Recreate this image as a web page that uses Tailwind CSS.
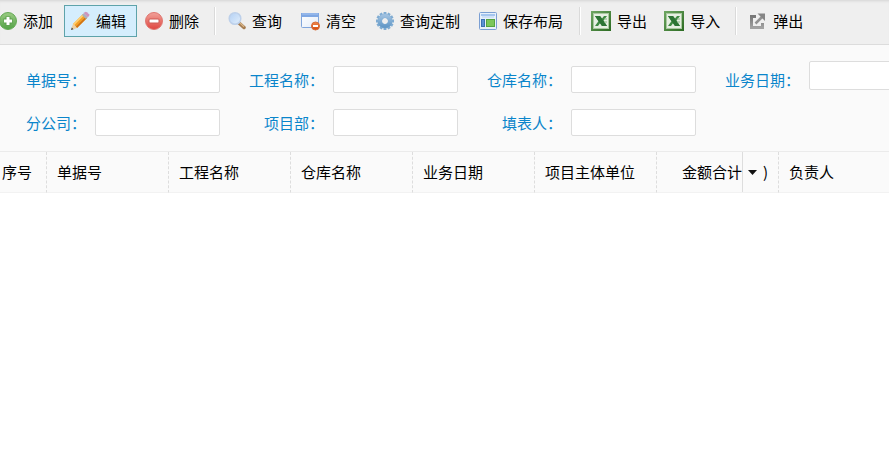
<!DOCTYPE html>
<html lang="zh-CN">
<head>
<meta charset="utf-8">
<title>单据列表</title>
<script src="https://cdn.jsdelivr.net/npm/@tailwindcss/browser@4"></script>
</head>
<body class="min-h-screen overflow-x-hidden bg-white font-['Noto_Sans_CJK_SC','Noto_Sans',sans-serif] text-[15px] leading-5 text-black">
<svg class="absolute size-0" aria-hidden="true">
  <defs>
    <linearGradient id="green" x2="0" y2="1"><stop stop-color="#9acb83"/><stop offset="1" stop-color="#53a246"/></linearGradient>
    <linearGradient id="red" x2="0" y2="1"><stop stop-color="#f1a29a"/><stop offset="1" stop-color="#df453f"/></linearGradient>
    <linearGradient id="orange" x2="0" y2="1"><stop stop-color="#f08a50"/><stop offset="1" stop-color="#d2480c"/></linearGradient>
    <linearGradient id="blue" x2="0" y2="1"><stop stop-color="#9dbfdf"/><stop offset="1" stop-color="#659ac8"/></linearGradient>
    <linearGradient id="lens" x2="1" y2="1"><stop stop-color="#b3d0f4"/><stop offset="1" stop-color="#e2effc"/></linearGradient>
    <linearGradient id="page" x2="1" y2="1"><stop stop-color="#ffffff"/><stop offset="1" stop-color="#e3ecf8"/></linearGradient>
    <linearGradient id="excel" x2="1" y2="1"><stop stop-color="#6fa763"/><stop offset="1" stop-color="#2c6b22"/></linearGradient>
    <linearGradient id="grey" x2="0" y2="1"><stop stop-color="#777777"/><stop offset="1" stop-color="#a2a2a2"/></linearGradient>
    <symbol id="excel-icon" viewBox="0 0 20 20">
      <rect width="20" height="20" fill="url(#excel)"/>
      <rect x="2.5" y="2.5" width="15" height="15" fill="#e6efe2" stroke="#a9c8a0"/>
      <path d="M4 5h5l2 2.5L13 5h3l-3.5 4.6L16 15h-5l-2-2.700L7 15H4l3.400-4.700z" fill="#3f8a42"/>
      <path d="M4 5h5l7 10h-5z" fill="#2c7434"/>
      <path d="M13 11h3M13 8h3" stroke="#8cb887"/>
    </symbol>
  </defs>
</svg>

<header class="overflow-hidden border-b border-[#dcdcdc] bg-[#efefef] shadow-[inset_0_3px_3px_-2px_#d4d4d4]">
  <div role="toolbar" aria-label="操作" class="-ml-[9px] flex h-11 items-center whitespace-nowrap pt-[2px] pb-[4px]">
    <button type="button" class="flex h-8 shrink-0 items-center gap-1.5 border border-transparent pr-2.5 pl-[5px]">
      <svg class="size-5" viewBox="0 0 20 20"><circle cx="11" cy="10" r="8.500" fill="url(#green)" stroke="#65aa56"/><path d="M11 5.500v9M6.500 10h9" stroke="#5a9d4c" stroke-width="5"/><path d="M11 6v8M7 10h8" stroke="#fff" stroke-width="3"/></svg>添加</button>
    <button type="button" class="flex h-8 shrink-0 items-center gap-1.5 border border-[#5ea3aa] bg-[#d5eefd] pr-2.5 pl-[5px]">
      <svg class="size-5" viewBox="0 0 20 20"><path d="M3 13 13 3l4 4L7 17z" fill="#f3a127"/><path d="M3 13 13 3l1.200 1.200L4.200 14.200z" fill="#ffd072"/><path d="m5.800 15.800 10-10L17 7 7 17z" fill="#cf7417"/><path d="m3 13 4 4-5.500 2-.5-.5z" fill="#eed0a0"/><path d="m1.800 16.500 1.700 1.700-2.500.8z" fill="#444"/><path d="m12 4 1.800-1.800 4 4L16 8z" fill="#a9b0bd"/><path d="m13.800 2.200 1-1q1-.7 2 0L19 3.300q.7 1 0 1.800l-1.200 1.100z" fill="#cd95bd"/></svg>编辑</button>
    <button type="button" class="flex h-8 shrink-0 items-center gap-1.5 border border-transparent pr-2.5 pl-[5px]">
      <svg class="size-5" viewBox="0 0 20 20"><circle cx="11" cy="10" r="8.500" fill="url(#red)" stroke="#df7771"/><rect x="6" y="8" width="10" height="4" rx="1" fill="#fff" stroke="#ce5a54"/></svg>删除</button>
    <span class="mr-1 ml-1 box-content h-7 w-px shrink-0 border-r border-white bg-[#dadada]" role="separator"></span>
    <button type="button" class="flex h-8 shrink-0 items-center gap-1.5 border border-transparent pr-2.5 pl-[5px]">
      <svg class="size-5" viewBox="0 0 20 20"><path d="m13.500 12.500 4.500 4" stroke="#a57c50" stroke-width="3.500" stroke-linecap="round"/><path d="m14 12 4 3.700" stroke="#d9b78b" stroke-width="1.200"/><circle cx="9" cy="7.500" r="5.800" fill="url(#lens)" stroke="#bdd0ea" stroke-width="1.500"/></svg>查询</button>
    <button type="button" class="ml-px flex h-8 shrink-0 items-center gap-1.5 border border-transparent pr-2.5 pl-[5px]">
      <svg class="size-5" viewBox="0 0 20 20"><rect x="1.500" y="2.500" width="17" height="14" rx="1" fill="url(#page)" stroke="#81a6dc"/><path d="M1 2h18v4H1z" fill="#7fa7e3"/><path d="M2 3h16" stroke="#a8c5f0"/><circle cx="15.500" cy="15" r="4" fill="url(#orange)" stroke="#d86d39"/><path d="M13 15h5" stroke="#fff" stroke-width="2"/></svg>清空</button>
    <button type="button" class="ml-px flex h-8 shrink-0 items-center gap-1.5 border border-transparent pr-2.5 pl-[5px]">
      <svg class="size-5" viewBox="0 0 20 20"><g transform="translate(11 10)"><circle r="5.200" fill="none" stroke="#7eabd2" stroke-width="4.500"/><g stroke="#7eabd2" stroke-width="2.800"><path d="M0-9V-6M0 6V9M-9 0H-6M6 0H9"/><path d="M0-9V-6M0 6V9M-9 0H-6M6 0H9" transform="rotate(30)"/><path d="M0-9V-6M0 6V9M-9 0H-6M6 0H9" transform="rotate(60)"/></g><circle r="5.200" fill="none" stroke="url(#blue)" stroke-width="4"/></g></svg>查询定制</button>
    <button type="button" class="flex h-8 shrink-0 items-center gap-1.5 border border-transparent pr-2.5 pl-[5px]">
      <svg class="size-5" viewBox="0 0 20 20"><rect x="2.500" y="1.500" width="17" height="17" rx="1" fill="#e7f0fb" stroke="#7b9fd3"/><path d="M4 3h14v2H4z" fill="#a5c6ef"/><path d="M5 6h12" stroke="#bad3f2"/><rect x="4.500" y="8.500" width="3" height="7" fill="#5a91d4" stroke="#3c70b2"/><rect x="9.500" y="8.500" width="8" height="7" fill="#7bc65a" stroke="#54a440"/></svg>保存布局</button>
    <span class="mr-1 ml-[5px] box-content h-7 w-px shrink-0 border-r border-white bg-[#dadada]" role="separator"></span>
    <button type="button" class="flex h-8 shrink-0 items-center gap-1.5 border border-transparent pr-2.5 pl-[5px]">
      <svg class="size-5"><use href="#excel-icon"/></svg>导出</button>
    <button type="button" class="flex h-8 shrink-0 items-center gap-1.5 border border-transparent pr-2.5 pl-[5px]">
      <svg class="size-5"><use href="#excel-icon"/></svg>导入</button>
    <span class="mr-1 ml-1 box-content h-7 w-px shrink-0 border-r border-white bg-[#dadada]" role="separator"></span>
    <button type="button" class="flex h-8 shrink-0 items-center gap-1.5 border border-transparent pr-2.5 pl-[5px]">
      <svg class="size-5" viewBox="0 0 20 20" fill="none"><path d="M9 5.500H4.500v11h11V12" stroke="url(#grey)" stroke-width="3"/><path d="m8.500 12.500 7-7" stroke="#929292" stroke-width="2.500"/><path d="M10.500 2.500H18V10l-2.500-2.500-2.500-2.500z" fill="#858585"/></svg>弹出</button>
  </div>
</header>

<form class="overflow-hidden border-b border-[#ebebeb] bg-[#fafafa] pt-4 pb-2.5">
  <div class="-mr-12 grid grid-cols-[repeat(3,238px)_minmax(220px,1fr)] gap-y-1.5 text-[#0a85cb]">
    <div class="flex h-[37px] items-center gap-[9px]"><label for="billNo" class="w-[86px] text-right">单据号：</label><input id="billNo" type="text" class="h-[27px] w-[125px] rounded-xs border border-[#dddddd] bg-white px-2 text-black"></div>
    <div class="flex h-[37px] items-center gap-[9px]"><label for="project" class="w-[86px] text-right">工程名称：</label><input id="project" type="text" class="h-[27px] w-[125px] rounded-xs border border-[#dddddd] bg-white px-2 text-black"></div>
    <div class="flex h-[37px] items-center gap-[9px]"><label for="store" class="w-[86px] text-right">仓库名称：</label><input id="store" type="text" class="h-[27px] w-[125px] rounded-xs border border-[#dddddd] bg-white px-2 text-black"></div>
    <div class="flex h-[37px] items-center gap-[9px]"><label for="bizDate" class="w-[86px] text-right">业务日期：</label><input id="bizDate" type="text" class="h-[29px] w-[125px] self-start rounded-xs border border-[#dddddd] bg-white px-2 text-black"></div>
    <div class="flex h-[37px] items-center gap-[9px]"><label for="branch" class="w-[86px] text-right">分公司：</label><input id="branch" type="text" class="h-[27px] w-[125px] rounded-xs border border-[#dddddd] bg-white px-2 text-black"></div>
    <div class="flex h-[37px] items-center gap-[9px]"><label for="dept" class="w-[86px] text-right">项目部：</label><input id="dept" type="text" class="h-[27px] w-[125px] rounded-xs border border-[#dddddd] bg-white px-2 text-black"></div>
    <div class="flex h-[37px] items-center gap-[9px]"><label for="author" class="w-[86px] text-right">填表人：</label><input id="author" type="text" class="h-[27px] w-[125px] rounded-xs border border-[#dddddd] bg-white px-2 text-black"></div>
  </div>
</form>

<table class="w-full table-fixed border-separate border-spacing-0 bg-[#fafafa] text-left whitespace-nowrap">
  <thead>
    <tr class="h-[41px] *:border-b *:border-b-[#f2f2f2] *:p-0 *:font-normal">
      <th scope="col" class="w-[47px] border-r border-r-[#dddddd] [border-right-style:dashed]"><div class="pl-0.5">序号</div></th>
      <th scope="col" class="w-[122px] border-r border-r-[#dddddd] [border-right-style:dashed]"><div class="pl-2.5">单据号</div></th>
      <th scope="col" class="w-[122px] border-r border-r-[#dddddd] [border-right-style:dashed]"><div class="pl-2.5">工程名称</div></th>
      <th scope="col" class="w-[122px] border-r border-r-[#dddddd] [border-right-style:dashed]"><div class="pl-2.5">仓库名称</div></th>
      <th scope="col" class="w-[122px] border-r border-r-[#dddddd] [border-right-style:dashed]"><div class="pl-2.5">业务日期</div></th>
      <th scope="col" class="w-[122px] border-r border-r-[#dddddd] [border-right-style:dashed]"><div class="pl-2.5">项目主体单位</div></th>
      <th scope="col" class="w-[122px] border-r border-r-[#dddddd] [border-right-style:dashed]"><div class="flex items-center justify-end pr-2.5">金额合计<button type="button" aria-label="列菜单" class="flex h-10 w-[21px] items-center justify-center border-l border-[#dddddd]"><svg class="h-[5px] w-[9px]" viewBox="0 0 9 5"><path d="M0 0h9L4.500 5z" fill="#111"/></svg></button>)</div></th>
      <th scope="col"><div class="pl-2.5">负责人</div></th>
    </tr>
  </thead>
</table>
</body>
</html>
